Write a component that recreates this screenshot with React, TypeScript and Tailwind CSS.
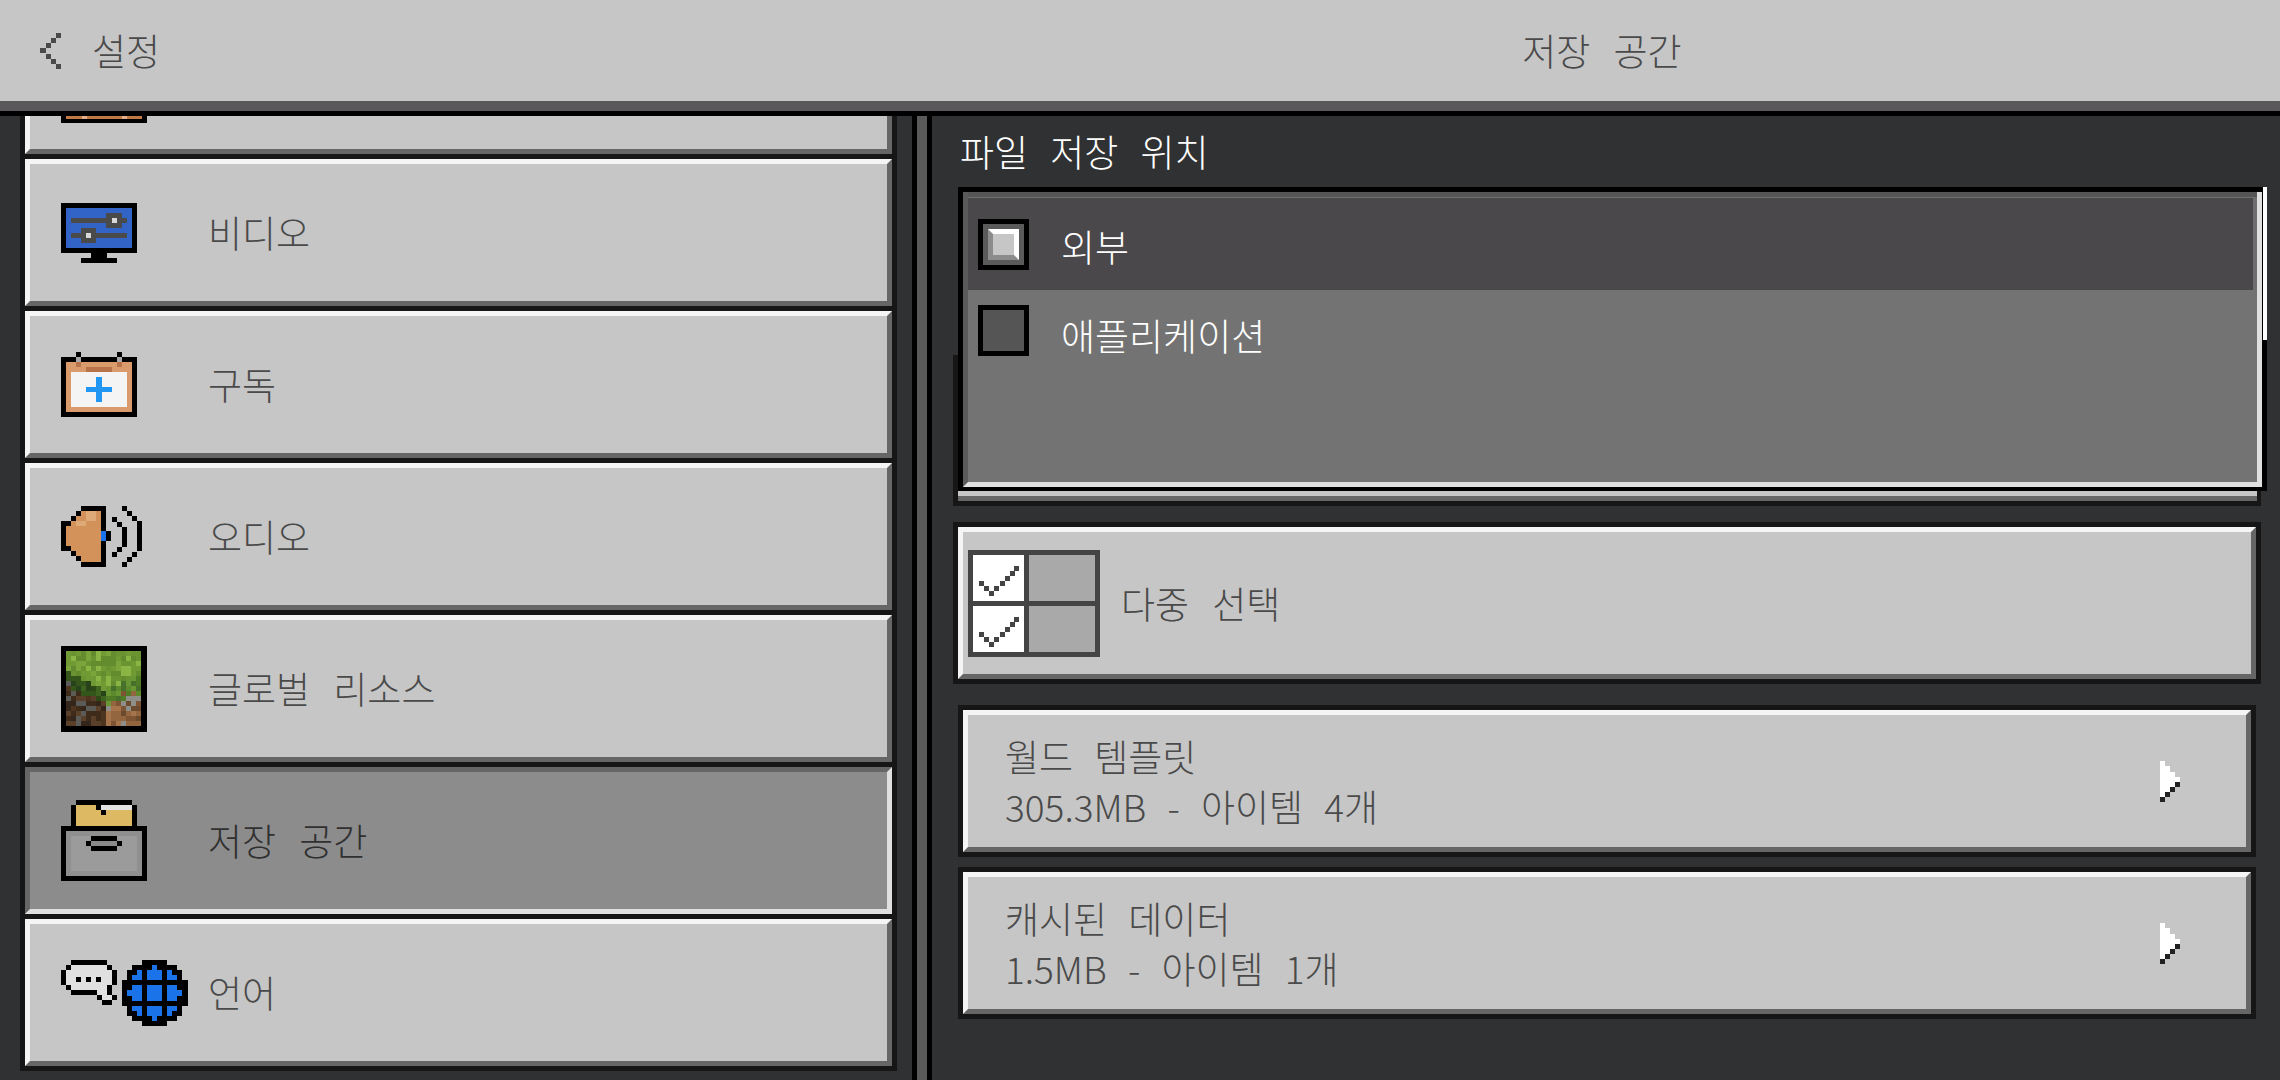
import type { ReactNode } from 'react';

type Box = [number, number, number, number];

const font = { fontFamily: '"Noto Sans CJK KR", "Noto Sans", sans-serif' };

function Px({ boxes, fill }: { boxes: Box[]; fill: string }) {
  return (
    <>
      {boxes.map(([x, y, w, h], i) => (
        <rect key={i} x={x} y={y} width={w} height={h} fill={fill} />
      ))}
    </>
  );
}

function Sprite({ x, y, w, h, children }: { x: number; y: number; w: number; h: number; children: ReactNode }) {
  return (
    <svg viewBox={`${x} ${y} ${w} ${h}`} width={w} height={h} shapeRendering="crispEdges" className="block shrink-0">
      {children}
    </svg>
  );
}

function VideoIcon() {
  return (
    <Sprite x={61} y={203} w={76} h={60}>
      <Px fill="#000" boxes={[[61, 203, 76, 50], [91, 253, 16, 5], [81, 258, 36, 5]]} />
      <Px fill="#3264c8" boxes={[[66, 208, 66, 40]]} />
      <Px fill="#4a4a4a" boxes={[[71, 218, 56, 5], [106, 213, 16, 15], [71, 233, 56, 5], [81, 228, 15, 15]]} />
      <Px fill="#d8d8d8" boxes={[[112, 218, 5, 5], [86, 233, 5, 5]]} />
    </Sprite>
  );
}

function CalendarIcon() {
  return (
    <Sprite x={61} y={352} w={76} h={66}>
      <Px fill="#000" boxes={[[61, 357, 76, 60], [76, 352, 5, 5], [117, 352, 5, 5]]} />
      <Px fill="#d99a6c" boxes={[[66, 362, 66, 50]]} />
      <Px fill="#a8a8a8" boxes={[[76, 357, 5, 5], [117, 357, 5, 5]]} />
      <Px fill="#b8734a" boxes={[[76, 362, 5, 5], [117, 362, 5, 5], [86, 367, 26, 5]]} />
      <Px fill="#f4f4f4" boxes={[[71, 372, 56, 35]]} />
      <Px fill="#2196f3" boxes={[[86, 387, 26, 5], [96, 377, 6, 25]]} />
    </Sprite>
  );
}

function AudioIcon() {
  return (
    <Sprite x={61} y={507} w={81} h={61}>
      <Px
        fill="#000"
        boxes={[
          [61, 522, 5, 30], [66, 522, 5, 30], [71, 517, 5, 40], [76, 512, 5, 50], [81, 507, 25, 61], [106, 532, 5, 10],
          [112, 518, 5, 5], [117, 523, 5, 5], [122, 528, 5, 20], [117, 548, 5, 5], [112, 553, 5, 5],
          [122, 507, 5, 5], [127, 512, 5, 5], [132, 517, 5, 5], [137, 522, 5, 30], [132, 553, 5, 5], [127, 558, 5, 5], [122, 563, 5, 5],
        ]}
      />
      <Px fill="#d2925a" boxes={[[66, 527, 5, 20], [71, 522, 5, 30], [76, 517, 5, 40], [81, 512, 20, 51]]} />
      <Px fill="#deaa78" boxes={[[86, 512, 10, 10], [76, 522, 10, 5]]} />
      <Px fill="#1a73e8" boxes={[[101, 532, 5, 10]]} />
    </Sprite>
  );
}

// little hash so the grass block gets a stable speckle
function speck(i: number, j: number) {
  const v = Math.sin(i * 12.9898 + j * 78.233) * 43758.5453;
  return v - Math.floor(v);
}

function pick(list: string[], i: number, j: number) {
  return list[Math.floor(speck(i, j) * list.length)];
}

function GrassIcon() {
  const cells: ReactNode[] = [];
  const top = ['#6f9a34', '#7ba53a', '#628c2e', '#8ab544', '#6a9432'];
  const leftGrass = ['#35561a', '#2d4a16', '#3e6420', '#28421a'];
  const rightGrass = ['#5d8a2c', '#4f7a26', '#689632', '#47702a'];
  const leftDirt = ['#4d3520', '#3f2b1a', '#5a4028', '#34261a', '#5b5b58'];
  const rightDirt = ['#94663f', '#7e5534', '#a6744a', '#6c4a2e', '#8f8f8a'];
  for (let j = 0; j < 15; j++) {
    for (let i = 0; i < 15; i++) {
      const x = 66 + i * 5;
      const y = 651 + j * 5;
      const dist = Math.abs(i - 7.5);
      const edge = 3.5 + (7.5 - dist) * 0.56;
      const isLeft = i < 8;
      let fill = pick(top, i, j);
      if (j >= edge) {
        const grassDepth = j - edge < 1.5 + speck(i + 3, j) * 2.5;
        if (isLeft) fill = grassDepth ? pick(leftGrass, i, j) : pick(leftDirt, i, j);
        else fill = grassDepth ? pick(rightGrass, i, j) : pick(rightDirt, i, j);
      }
      cells.push(<rect key={`${i}-${j}`} x={x} y={y} width={5} height={5} fill={fill} />);
    }
  }
  return (
    <Sprite x={61} y={646} w={86} h={86}>
      <rect x={61} y={646} width={86} height={86} fill="#000" />
      {cells}
    </Sprite>
  );
}

function StorageIcon() {
  return (
    <Sprite x={61} y={801} w={86} h={81}>
      <Px fill="#000" boxes={[[76, 801, 56, 5], [71, 806, 5, 21], [132, 806, 5, 21]]} />
      <Px fill="#dcb962" boxes={[[76, 806, 56, 21]]} />
      <Px fill="#000" boxes={[[96, 806, 5, 5], [101, 811, 5, 5]]} />
      <Px fill="#e2e2e2" boxes={[[101, 806, 31, 5]]} />
      <Px fill="#000" boxes={[[61, 827, 86, 55]]} />
      <Px fill="#8f8f8f" boxes={[[66, 832, 76, 45]]} />
      <Px fill="#9b9b9b" boxes={[[71, 837, 66, 35]]} />
      <Px fill="#000" boxes={[[91, 837, 26, 5], [86, 842, 36, 5], [91, 847, 26, 5]]} />
      <Px fill="#8a8a8a" boxes={[[91, 842, 26, 5]]} />
    </Sprite>
  );
}

function LanguageIcon() {
  return (
    <Sprite x={61} y={960} w={127} h={66}>
      <Px fill="#e0e0e0" boxes={[[66, 970, 46, 15], [71, 965, 36, 25], [97, 985, 10, 10], [102, 995, 10, 5]]} />
      <Px
        fill="#000"
        boxes={[
          [71, 960, 36, 5], [66, 965, 5, 5], [107, 965, 5, 5], [61, 970, 5, 15], [112, 970, 5, 15], [66, 985, 5, 5],
          [71, 990, 26, 5], [97, 995, 5, 5], [107, 985, 5, 10], [102, 1000, 10, 5], [112, 995, 5, 5],
          [76, 977, 5, 5], [86, 977, 5, 5], [96, 977, 5, 5],
        ]}
      />
      <Px
        fill="#000"
        boxes={[
          [142, 960, 25, 5], [132, 965, 45, 5], [127, 970, 55, 10], [122, 980, 66, 26], [127, 1006, 55, 10],
          [132, 1016, 45, 5], [142, 1021, 25, 5],
        ]}
      />
      <Px
        fill="#1a73e8"
        boxes={[
          [147, 985, 15, 16],
          [152, 965, 5, 5], [147, 970, 15, 10],
          [147, 1006, 15, 10], [152, 1016, 5, 5],
          [127, 990, 5, 6], [132, 985, 10, 16],
          [177, 990, 5, 6], [167, 985, 10, 16],
          [137, 970, 5, 5], [132, 975, 10, 5],
          [167, 970, 5, 5], [167, 975, 10, 5],
          [132, 1006, 10, 5], [137, 1011, 5, 5],
          [167, 1006, 10, 5], [167, 1011, 5, 5],
        ]}
      />
    </Sprite>
  );
}

function MultiSelectIcon() {
  const dots: [number, number][] = [[979, 580], [984, 585], [989, 590], [994, 585], [1000, 580], [1005, 575], [1010, 570], [1014, 565]];
  return (
    <Sprite x={968} y={549} w={132} h={107}>
      <rect x={968} y={549} width={132} height={107} fill="#444" />
      <Px fill="#fff" boxes={[[973, 554, 51, 46], [973, 605, 51, 46]]} />
      <Px fill="#a9a9a9" boxes={[[1029, 554, 66, 46], [1029, 605, 66, 46]]} />
      <Px fill="#444" boxes={dots.map(([x, y]): Box => [x, y, 5, 5])} />
      <Px fill="#444" boxes={dots.map(([x, y]): Box => [x, y + 51, 5, 5])} />
    </Sprite>
  );
}

function BackArrow() {
  return (
    <Sprite x={40} y={32} w={21} h={36}>
      <Px fill="#4a4a4a" boxes={[[56, 32, 5, 5], [51, 37, 5, 5], [46, 42, 5, 5], [40, 47, 6, 5], [46, 53, 5, 5], [51, 58, 5, 5], [56, 63, 5, 5]]} />
    </Sprite>
  );
}

function ChevronRight() {
  return (
    <Sprite x={2160} y={760} w={20} h={41}>
      <Px fill="#fff" boxes={[[2160, 760, 5, 36], [2165, 765, 5, 26], [2170, 771, 5, 15], [2175, 776, 5, 5]]} />
      <Px fill="#222" boxes={[[2160, 796, 5, 5], [2165, 791, 5, 5], [2170, 786, 5, 5], [2175, 781, 5, 5]]} />
    </Sprite>
  );
}

function SideRow({ icon, label, active }: { icon: ReactNode; label: string; active?: boolean }) {
  return (
    <div className="h-[152px] shrink-0 border-b-[5px] border-[#161616]">
      <div
        className={
          active
            ? 'flex h-full items-center border-[5px] border-t-[#666] border-l-[#666] border-r-[#e0e0e0] border-b-[#e0e0e0] bg-[#8c8c8c] text-[#303030]'
            : 'flex h-full items-center border-[5px] border-t-[#f5f5f5] border-l-[#f5f5f5] border-r-[#666] border-b-[#666] bg-[#c6c6c6] text-[#4a4a4a]'
        }
      >
        <div className="flex w-[178px] shrink-0 pl-[31px]">{icon}</div>
        <span className="text-[37px] font-light leading-none [word-spacing:15px]">{label}</span>
      </div>
    </div>
  );
}

function StorageRow({ title, sub }: { title: string; sub: string }) {
  return (
    <div className="h-[152px] border-[5px] border-b-[5px] border-[#161616]">
      <div className="flex h-full items-center border-[5px] border-t-[#f5f5f5] border-l-[#f5f5f5] border-r-[#666] border-b-[#666] bg-[#c6c6c6] pl-[37px] pr-[66px]">
        <div className="flex flex-col gap-4 text-[37px] font-light leading-[34px] text-[#4a4a4a] [word-spacing:13px]">
          <span>{title}</span>
          <span>{sub}</span>
        </div>
        <div className="ml-auto">
          <ChevronRight />
        </div>
      </div>
    </div>
  );
}

export default function App() {
  return (
    <div className="flex h-[1080px] w-[2280px] flex-col overflow-hidden bg-[#303133]" style={font}>
      <header className="flex h-[101px] shrink-0 items-center bg-[#c6c6c6] text-[#4a4a4a]">
        <div className="flex w-[932px] items-center pl-10">
          <BackArrow />
          <span className="ml-[31px] text-[37px] font-light leading-none">설정</span>
        </div>
        <div className="flex-1 pr-2 text-center text-[37px] font-light leading-none [word-spacing:15px]">저장 공간</div>
      </header>
      <div className="h-[10px] shrink-0 bg-[#5a585a]" />
      <div className="h-[5px] shrink-0 bg-black" />

      <div className="flex min-h-0 flex-1">
        {/* left settings list */}
        <div className="w-[917px] shrink-0 border-r-[5px] border-black pl-5 pr-[15px]">
          <div className="h-[955px] overflow-hidden border-x-[5px] border-[#161616]">
            <div className="h-[43px] border-b-[5px] border-[#161616]">
              <div className="h-full border-x-[5px] border-b-[5px] border-l-[#f5f5f5] border-r-[#666] border-b-[#666] bg-[#c6c6c6] pl-[31px]">
                <svg viewBox="61 116 86 7" width={86} height={7} shapeRendering="crispEdges" className="block">
                  <rect x={61} y={116} width={86} height={7} fill="#000" />
                  <rect x={66} y={116} width={76} height={3} fill="#c07a45" />
                  <rect x={82} y={116} width={5} height={3} fill="#e0b090" />
                  <rect x={122} y={116} width={5} height={3} fill="#e0b090" />
                </svg>
              </div>
            </div>
            <SideRow icon={<VideoIcon />} label="비디오" />
            <SideRow icon={<CalendarIcon />} label="구독" />
            <SideRow icon={<AudioIcon />} label="오디오" />
            <SideRow icon={<GrassIcon />} label="글로벌 리소스" />
            <SideRow icon={<StorageIcon />} label="저장 공간" active />
            <SideRow icon={<LanguageIcon />} label="언어" />
          </div>
        </div>

        <div className="w-[10px] shrink-0 bg-[#5a5a5a]" />

        {/* right storage panel */}
        <div className="flex-1 border-l-[5px] border-black pl-[21px] pr-[15px]">
          <div className="flex h-[71px] items-center pl-[7px] text-[37px] font-light leading-none text-white [word-spacing:14px]">
            파일 저장 위치
          </div>

          <div className="relative ml-[5px] w-[1309px]">
            <div className="h-[304px] border-[5px] border-b-[4px] border-black">
              <div className="flex h-full flex-col border-b-[5px] border-l-[5px] border-r-[5px] border-b-[#e0e0e0] border-l-[#5a5a5a] border-r-[#e0e0e0] bg-[#737373]">
                <div className="h-[6px] shrink-0 border-b border-[#6f6f6f] bg-[#555]" />
                <div className="flex h-[92px] shrink-0 items-center gap-8 border-r-[4px] border-[#6f6f6f] bg-[#4a484a] pl-[10px] text-[37px] font-light leading-none text-white">
                  <div className="flex h-[51px] w-[51px] items-center justify-center border-[5px] border-black bg-[#5a5a5a]">
                    <div className="h-[31px] w-[31px] border-[5px] border-t-white border-r-white border-b-[#8c8c8c] border-l-[#8c8c8c] bg-[#c6c6c6]" />
                  </div>
                  <span className="pt-[5px]">외부</span>
                </div>
                <div className="flex shrink-0 gap-8 pl-[10px] pt-[15px] text-[37px] font-light leading-none text-white">
                  <div className="h-[51px] w-[51px] border-[5px] border-black bg-[#555]" />
                  <span className="pt-[12px]">애플리케이션</span>
                </div>
              </div>
            </div>
            <div className="absolute left-[1305px] top-0 h-[153px] w-[4px] bg-white" />
            <div className="absolute bottom-0 left-[-5px] h-[151px] w-[5px] bg-[#161616]" />
            <div className="w-[1303px] border-b-[5px] border-r-[4px] border-[#161616]">
              <div className="h-[5px] bg-[#c6c6c6]" />
              <div className="h-[5px] bg-[#666]" />
            </div>
          </div>

          <div className="mt-4 h-[162px] w-[1308px] border-[5px] border-[#161616]">
            <div className="flex h-full items-center gap-[22px] border-[5px] border-t-[#f5f5f5] border-l-[#f5f5f5] border-r-[#666] border-b-[#666] bg-[#c6c6c6] pl-[5px]">
              <MultiSelectIcon />
              <span className="-ml-[1px] text-[37px] font-light leading-none text-[#4a4a4a] [word-spacing:15px]">다중 선택</span>
            </div>
          </div>

          <div className="ml-[5px] mt-[21px] flex w-[1298px] flex-col gap-[10px]">
            <StorageRow title="월드 템플릿" sub="305.3MB - 아이템 4개" />
            <StorageRow title="캐시된 데이터" sub="1.5MB - 아이템 1개" />
          </div>
        </div>
      </div>
    </div>
  );
}
